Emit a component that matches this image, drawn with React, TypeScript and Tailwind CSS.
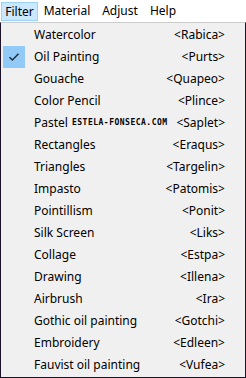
import React from 'react';

const items: { label: string; code: string; checked?: boolean; mark?: boolean }[] = [
  { label: 'Watercolor', code: '<Rabica>' },
  { label: 'Oil Painting', code: '<Purts>', checked: true },
  { label: 'Gouache', code: '<Quapeo>' },
  { label: 'Color Pencil', code: '<Plince>' },
  { label: 'Pastel', code: '<Saplet>', mark: true },
  { label: 'Rectangles', code: '<Eraqus>' },
  { label: 'Triangles', code: '<Targelin>' },
  { label: 'Impasto', code: '<Patomis>' },
  { label: 'Pointillism', code: '<Ponit>' },
  { label: 'Silk Screen', code: '<Liks>' },
  { label: 'Collage', code: '<Estpa>' },
  { label: 'Drawing', code: '<Illena>' },
  { label: 'Airbrush', code: '<Ira>' },
  { label: 'Gothic oil painting', code: '<Gotchi>' },
  { label: 'Embroidery', code: '<Edleen>' },
  { label: 'Fauvist oil painting', code: '<Vufea>' },
];

const Check = () => (
  <svg width="12" height="10" viewBox="0 0 12 10" fill="none">
    <path d="M1.5 5.2 L4.4 8 L10.5 1.8" stroke="#1f2d3d" strokeWidth="1.5" />
  </svg>
);

const App: React.FC = () => {
  return (
    <div
      className="w-[246px] h-[378px] flex flex-col bg-white text-black text-[12px] overflow-hidden"
      style={{ fontFamily: '"Noto Sans", "Open Sans", sans-serif' }}
    >
      {/* menu bar */}
      <div className="h-[22px] flex items-stretch bg-white">
        <div className="ml-[1px] mt-[2px] mb-[1px] w-[37px] flex items-center justify-center bg-[#cce8ff] border border-[#99d1ff]">Filter</div>
        <div className="w-[58px] flex items-center justify-center">Material</div>
        <div className="w-[48px] flex items-center justify-center">Adjust</div>
        <div className="w-[38px] flex items-center justify-center">Help</div>
      </div>

      {/* dropdown */}
      <div className="flex-1 flex flex-col bg-[#f0f0f0] border-t border-t-[#cccccc] border-l border-r border-b border-[#1c1228] pt-[1px]">
        {items.map((it) => (
          <div key={it.label} className="h-[22px] flex items-center shrink-0">
            <div className="w-[33px] h-[22px] pl-[2px] flex items-stretch">
              {it.checked && (
                <div className="w-[22px] bg-[#91c9f7] flex items-center justify-center">
                  <Check />
                </div>
              )}
            </div>
            <div className="flex-1 flex items-center">
              <span>{it.label}</span>
              {it.mark && (
                <span
                  className="ml-[4px] text-[8px] tracking-[0.5px] font-bold"
                  style={{ fontFamily: '"DejaVu Sans Mono", monospace' }}
                >
                  ESTELA-FONSECA.COM
                </span>
              )}
            </div>
            <div className="pr-[20px]">{it.code}</div>
          </div>
        ))}
      </div>
    </div>
  );
};

export default App;
